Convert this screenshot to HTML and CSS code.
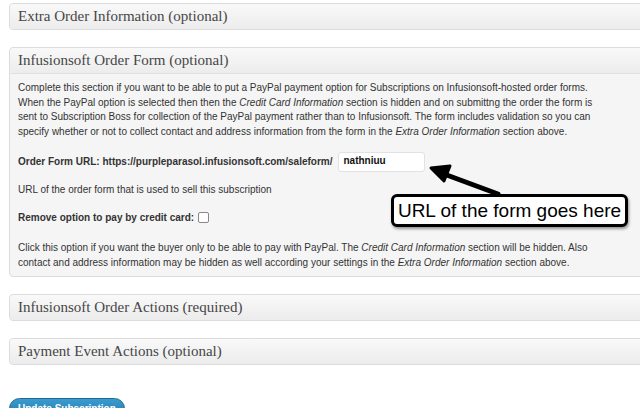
FILE: index.html
```html
<!DOCTYPE html>
<html lang="en">
<head>
  <meta charset="UTF-8" />
  <title>Subscription</title>
  <link rel="stylesheet" href="styles.css">
</head>
<body>
  <div class="page">
    <div class="box">
      <h3 class="box-title">Extra Order Information (optional)</h3>
    </div>

    <div class="box">
      <h3 class="box-title">Infusionsoft Order Form (optional)</h3>
      <div class="box-body">
        <p class="para">Complete this section if you want to be able to put a PayPal payment option for Subscriptions on Infusionsoft-hosted order forms.<br>
        When the PayPal option is selected then then the <em>Credit Card Information</em> section is hidden and on submittng the order the form is<br>
        sent to Subscription Boss for collection of the PayPal payment rather than to Infusionsoft. The form includes validation so you can<br>
        specify whether or not to collect contact and address information from the form in the <em>Extra Order Information</em> section above.</p>
        <div class="url-row">
          <label class="lbl" for="url">Order Form URL: https://purpleparasol.infusionsoft.com/saleform/</label>
          <input class="url-input" id="url" type="text" value="nathniuu">
        </div>
        <p class="hint">URL of the order form that is used to sell this subscription</p>
        <div class="check-row">
          <label class="lbl" for="nocc">Remove option to pay by credit card:</label>
          <span class="check" id="nocc"></span>
        </div>
        <p class="para last">Click this option if you want the buyer only to be able to pay with PayPal. The <em>Credit Card Information</em> section will be hidden. Also<br>
        contact and address information may be hidden as well according your settings in the <em>Extra Order Information</em> section above.</p>
      </div>
    </div>

    <div class="box">
      <h3 class="box-title">Infusionsoft Order Actions (required)</h3>
    </div>

    <div class="box">
      <h3 class="box-title">Payment Event Actions (optional)</h3>
    </div>

    <button class="btn">Update Subscription</button>
  </div>

  <!-- screenshot annotation -->
  <svg class="arrow" width="90" height="40" viewBox="0 0 90 40">
    <path d="M72 33 L18 13" stroke="#000" stroke-width="5" stroke-linecap="round" fill="none"/>
    <path d="M5 7 L24 5 L18 20 Z" fill="#000" stroke="#000" stroke-width="3" stroke-linejoin="round"/>
  </svg>
  <div class="callout">URL of the form goes here</div>
</body>
</html>
```

FILE: styles.css
```css
body {
  margin: 0;
  background: #fff;
  font-family: "Liberation Sans", Arial, sans-serif;
  color: #333;
  overflow: hidden;
}
.page {
  padding: 3px 0 0 9px;
}
.box {
  margin-right: -6px;
  margin-bottom: 17px;
  border: 1px solid #dcdcdc;
  border-radius: 4px;
  background: #f5f5f5;
}
.box-title {
  margin: 0;
  height: 25px;
  line-height: 25px;
  padding-left: 8px;
  font-family: "Liberation Serif", Georgia, serif;
  font-size: 15px;
  font-weight: normal;
  color: #464646;
  background: linear-gradient(to bottom, #f9f9f9, #ececec);
  border-radius: 4px;
}
.box-body {
  border-top: 1px solid #dfdfdf;
  padding: 7px 9px 6px 8px;
  font-size: 10px;
  line-height: 14.5px;
  white-space: nowrap;
}
.para {
  margin: 0;
}
.para.last {
  margin-top: 16px;
}
.url-row {
  display: flex;
  align-items: center;
  margin-top: 13px;
}
.lbl {
  font-weight: bold;
  color: #333;
}
.url-input {
  box-sizing: border-box;
  width: 87px;
  height: 20px;
  margin-left: 6px;
  padding: 0 4px 3px;
  border: 1px solid #e2e2e2;
  border-radius: 3px;
  background: #fff;
  font-family: "Liberation Sans", Arial, sans-serif;
  font-size: 10px;
  font-weight: bold;
  color: #111;
}
.hint {
  margin: 11px 0 0;
}
.check-row {
  display: flex;
  align-items: center;
  margin-top: 13px;
}
.check {
  width: 9px;
  height: 9px;
  margin-left: 4px;
  border: 1px solid #888;
  border-radius: 2px;
  background: #fff;
}
.btn {
  margin-top: 16px;
  padding: 4px 8px;
  border: 1px solid #1e6a92;
  border-radius: 11px;
  background: linear-gradient(to bottom, #3a9bd0, #2579a8);
  color: #fff;
  font-family: "Liberation Sans", Arial, sans-serif;
  font-size: 10px;
  font-weight: bold;
}
.arrow {
  position: absolute;
  left: 426px;
  top: 161px;
}
.callout {
  position: absolute;
  left: 391px;
  top: 194px;
  width: 231px;
  height: 27px;
  line-height: 27px;
  border: 3px solid #000;
  border-radius: 6px;
  background: #fff;
  box-shadow: 1px 2px 3px rgba(0, 0, 0, 0.4);
  font-size: 19px;
  color: #000;
  text-align: center;
}
```
